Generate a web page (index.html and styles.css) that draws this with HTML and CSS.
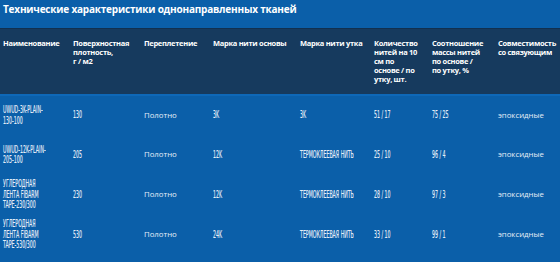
FILE: index.html
```html
<!DOCTYPE html>
<html lang="ru">
<head>
<meta charset="utf-8">
<link rel="stylesheet" href="styles.css">
</head>
<body>
<div class="page">
  <h1 class="title">Технические характеристики однонаправленных тканей</h1>
  <table class="spec">
    <colgroup>
      <col class="c1"><col class="c2"><col class="c3"><col class="c4">
      <col class="c5"><col class="c6"><col class="c7"><col class="c8">
    </colgroup>
    <thead>
      <tr>
        <th>Наименование</th>
        <th>Поверхностная<br>плотность,<br>г / м2</th>
        <th>Переплетение</th>
        <th>Марка нити основы</th>
        <th>Марка нити утка</th>
        <th>Количество<br>нитей на 10<br>см по<br>основе / по<br>утку, шт.</th>
        <th>Соотношение<br>массы нитей<br>по основе /<br>по утку, %</th>
        <th>Совместимость<br>со связующим</th>
      </tr>
    </thead>
    <tbody>
      <tr>
        <td><span class="cond">UWUD-3K-PLAIN-<br>130-100</span></td>
        <td><span class="cond">130</span></td>
        <td>Полотно</td>
        <td><span class="cond">3K</span></td>
        <td><span class="cond">3K</span></td>
        <td><span class="cond">51 / 17</span></td>
        <td><span class="cond">75 / 25</span></td>
        <td>эпоксидные</td>
      </tr>
      <tr>
        <td><span class="cond">UWUD-12K-PLAIN-<br>205-100</span></td>
        <td><span class="cond">205</span></td>
        <td>Полотно</td>
        <td><span class="cond">12K</span></td>
        <td><span class="cond">ТЕРМОКЛЕЕВАЯ НИТЬ</span></td>
        <td><span class="cond">25 / 10</span></td>
        <td><span class="cond">96 / 4</span></td>
        <td>эпоксидные</td>
      </tr>
      <tr>
        <td><span class="cond">УГЛЕРОДНАЯ<br>ЛЕНТА FIBARM<br>TAPE-230/300</span></td>
        <td><span class="cond">230</span></td>
        <td>Полотно</td>
        <td><span class="cond">12K</span></td>
        <td><span class="cond">ТЕРМОКЛЕЕВАЯ НИТЬ</span></td>
        <td><span class="cond">28 / 10</span></td>
        <td><span class="cond">97 / 3</span></td>
        <td>эпоксидные</td>
      </tr>
      <tr>
        <td><span class="cond">УГЛЕРОДНАЯ<br>ЛЕНТА FIBARM<br>TAPE-530/300</span></td>
        <td><span class="cond">530</span></td>
        <td>Полотно</td>
        <td><span class="cond">24K</span></td>
        <td><span class="cond">ТЕРМОКЛЕЕВАЯ НИТЬ</span></td>
        <td><span class="cond">33 / 10</span></td>
        <td><span class="cond">99 / 1</span></td>
        <td>эпоксидные</td>
      </tr>
    </tbody>
  </table>
</div>
</body>
</html>
```

FILE: styles.css
```css
html, body {
  margin: 0;
  padding: 0;
  background: #0b5fa9;
}
.page {
  width: 560px;
  height: 262px;
  overflow: hidden;
  background: #0b5fa9;
  color: #ffffff;
  font-family: "Open Sans", "Liberation Sans", sans-serif;
}
.title {
  margin: 0;
  height: 28px;
  box-sizing: border-box;
  padding: 1px 0 0 3px;
  font-size: 10px;
  font-weight: 700;
  letter-spacing: -0.2px;
  line-height: 16px;
  background: #0b5fa9;
  white-space: nowrap;
}
.spec {
  width: 560px;
  table-layout: fixed;
  border-collapse: collapse;
  border-spacing: 0;
}
.c1 { width: 70px; }
.c2 { width: 71px; }
.c3 { width: 69px; }
.c4 { width: 87px; }
.c5 { width: 74px; }
.c6 { width: 58px; }
.c7 { width: 66px; }
.c8 { width: 65px; }
.spec thead tr {
  background: #163a5e;
  border-top: 1px solid #12304f;
  border-bottom: 2px solid #0e68b8;
}
.spec th {
  height: 66px;
  box-sizing: border-box;
  padding: 10px 0 0 3px;
  vertical-align: top;
  text-align: left;
  font-size: 7.5px;
  font-weight: 700;
  letter-spacing: -0.3px;
  line-height: 9px;
  white-space: nowrap;
}
.spec td {
  height: 40px;
  box-sizing: border-box;
  padding: 0 0 0 3px;
  vertical-align: middle;
  font-size: 7.8px;
  line-height: 10.5px;
  white-space: nowrap;
  color: #e6eef8;
}
.cond {
  display: inline-block;
  font-family: "DejaVu Sans Condensed", "DejaVu Sans", sans-serif;
  font-size: 10.5px;
  font-weight: 400;
  line-height: 10.5px;
  -webkit-text-stroke: 0.15px #e6eef8;
  transform: scaleX(0.5);
  transform-origin: left center;
}
```
